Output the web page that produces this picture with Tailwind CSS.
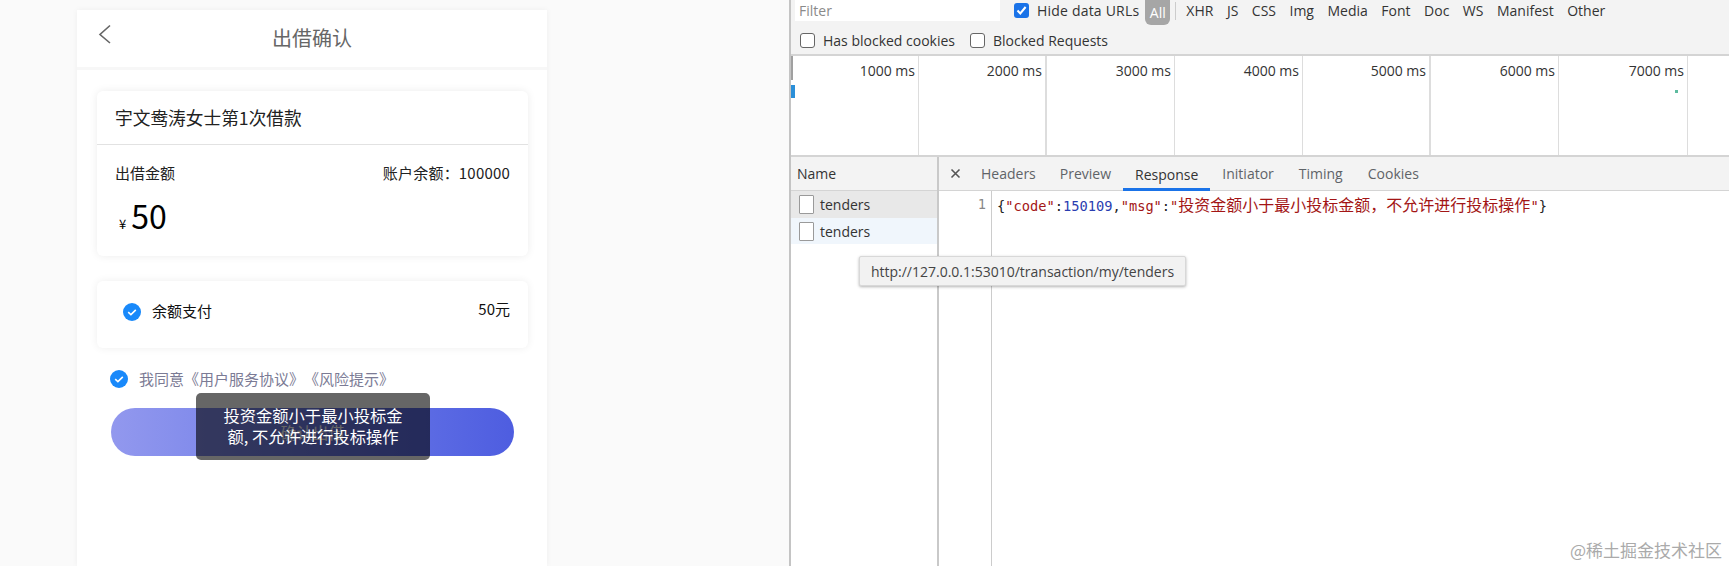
<!DOCTYPE html>
<html lang="zh-CN">
  <head>
    <meta charset="UTF-8" />
    <script src="https://cdn.jsdelivr.net/npm/@tailwindcss/browser@4"></script>
    <title>出借确认</title>
  </head>
  <body class="relative flex h-[566px] w-[1729px] overflow-hidden bg-white font-['Noto_Sans_CJK_SC',sans-serif]">
    <!-- mobile page -->
    <div class="h-full w-[789px] shrink-0 bg-[#fafafa] pl-[77px] pt-[10px]">
      <div class="relative h-[556px] w-[470px] bg-white shadow-[0_0_6px_rgba(0,0,0,0.05)]">
        <div class="relative flex h-[60px] items-center justify-center border-b-[3px] border-[#f7f7f7] text-[20px] text-[#666]">
          <svg class="absolute left-[21px] top-[14px]" width="14" height="20" viewBox="0 0 14 20" fill="none" stroke="#666" stroke-width="1.6"><path d="M12 1.5 2 10.5l10 8.5" /></svg>
          <span class="-mt-[1px]">出借确认</span>
        </div>
        <div class="ml-[20px] mr-[19px] mt-[21px] h-[165px] rounded-[6px] bg-white shadow-[0_0_8px_rgba(0,0,0,0.08)]">
          <div class="flex h-[54px] items-center border-b border-[#e2e2e2] pb-[1px] pl-[18px] text-[17.7px] text-[#222]">宇文鸯涛女士第1次借款</div>
          <div class="flex justify-between pl-[18px] pr-[18px] pt-[17px] text-[15px] leading-[22px] text-[#222]">
            <span>出借金额</span>
            <span class="tracking-[0.2px]">账户余额：100000</span>
          </div>
          <div class="flex items-baseline pl-[22px] pt-[11px] text-black">
            <span class="mr-[5px] text-[13px]">¥</span>
            <span class="text-[32px] leading-[40px]">50</span>
          </div>
        </div>
        <div class="ml-[20px] mr-[19px] mt-[25px] flex h-[67px] justify-between rounded-[6px] bg-white pl-[26px] pr-[18px] text-[15px] text-[#111] shadow-[0_0_8px_rgba(0,0,0,0.07)]">
          <div class="flex h-[61px] items-center gap-[11px]">
            <svg width="18" height="18" viewBox="0 0 18 18"><circle cx="9" cy="9" r="9" fill="#1989fa" /><path d="M5.2 9.2 7.9 11.6 12.8 6.9" fill="none" stroke="#fff" stroke-width="1.6" /></svg>
            <span>余额支付</span>
          </div>
          <span class="pt-[17px] leading-[22px]">50元</span>
        </div>
        <div class="ml-[33px] mt-[20px] flex h-[22px] items-center gap-[11px] text-[15px] text-[#7b7b95]">
          <svg width="18" height="18" viewBox="0 0 18 18"><circle cx="9" cy="9" r="9" fill="#1989fa" /><path d="M5.2 9.2 7.9 11.6 12.8 6.9" fill="none" stroke="#fff" stroke-width="1.6" /></svg>
          <span class="[text-spacing-trim:space-all]">我同意《用户服务协议》《风险提示》</span>
        </div>
        <div class="ml-[34px] mt-[18px] flex h-[48px] w-[403px] items-center justify-center rounded-full bg-gradient-to-r from-[#9298ee] to-[#4e5de0] text-[16px] text-white">确认出借</div>
        <!-- toast -->
        <div class="absolute left-[119px] top-[383px] w-[234px] rounded-[5px] bg-black/60 px-[26px] pb-[13px] pt-[12px] text-center text-[16.3px] leading-[21px] text-white">投资金额小于最小投标金额, 不允许进行投标操作</div>
      </div>
    </div>

    <!-- devtools -->
    <div class="relative flex h-full flex-1 flex-col border-l-2 border-[#c4c4c4] font-['Open_Sans','Noto_Sans_CJK_SC',sans-serif] text-[14px] text-[#333]">
      <div class="h-[56px] shrink-0 border-b-2 border-[#d4d4d4] bg-[#f3f3f3]">
        <div class="flex h-[27px] items-start pl-[4px]">
          <div class="flex h-[21px] w-[205px] items-center bg-white pl-[4px] text-[#8a8a8a]">Filter</div>
          <div class="ml-[14px] mt-[3px] flex h-[15px] w-[15px] items-center justify-center rounded-[3px] bg-[#1a73e8]">
            <svg width="11" height="11" viewBox="0 0 11 11"><path d="M1.5 5.5 4.3 8.5 9.6 2" fill="none" stroke="#fff" stroke-width="2" /></svg>
          </div>
          <span class="ml-[8px] leading-[21px] tracking-[0.2px]">Hide data URLs</span>
          <span class="ml-[6px] flex h-[25px] w-[25px] items-center justify-center rounded-b-[6px] bg-[#a6a6a6] text-white">All</span>
          <span class="ml-[5px] mt-[2px] h-[18px] w-px bg-[#ccc]"></span>
          <div class="ml-[10px] flex gap-[13.5px] leading-[22px] text-[#333]">
            <span>XHR</span><span>JS</span><span>CSS</span><span>Img</span><span>Media</span><span>Font</span><span>Doc</span><span>WS</span><span>Manifest</span><span>Other</span>
          </div>
        </div>
        <div class="flex h-[26px] items-center pl-[9px]">
          <span class="h-[15px] w-[15px] rounded-[3px] border border-[#666] bg-white"></span>
          <span class="ml-[8px]">Has blocked cookies</span>
          <span class="ml-[15px] h-[15px] w-[15px] rounded-[3px] border border-[#666] bg-white"></span>
          <span class="ml-[8px]">Blocked Requests</span>
        </div>
      </div>

      <!-- overview timeline -->
      <div class="relative flex h-[101px] shrink-0 border-b-2 border-[#d4d4d4] pl-[1px]">
        <div class="w-[127px] shrink-0 border-r border-[#ddd] pr-[3px] pt-[4px] text-right">1000 ms</div>
        <div class="w-[128px] shrink-0 border-r-2 border-[#ddd] pr-[3px] pt-[4px] text-right">2000 ms</div>
        <div class="w-[128px] shrink-0 border-r border-[#ddd] pr-[3px] pt-[4px] text-right">3000 ms</div>
        <div class="w-[128px] shrink-0 border-r border-[#ddd] pr-[3px] pt-[4px] text-right">4000 ms</div>
        <div class="w-[128px] shrink-0 border-r-2 border-[#ddd] pr-[3px] pt-[4px] text-right">5000 ms</div>
        <div class="w-[128px] shrink-0 border-r border-[#ddd] pr-[3px] pt-[4px] text-right">6000 ms</div>
        <div class="w-[129px] shrink-0 border-r border-[#ddd] pr-[3px] pt-[4px] text-right">7000 ms</div>
        <span class="absolute left-0 top-0 h-[24px] w-[2px] bg-[#a0a0a0]"></span>
        <span class="absolute left-0 top-[29px] h-[13px] w-[4px] bg-[#2b8fd8]"></span>
        <span class="absolute left-[884px] top-[34px] h-[3px] w-[3px] bg-[#5dbb9f]"></span>
      </div>

      <!-- requests and response -->
      <div class="flex min-h-0 flex-1">
        <div class="w-[148px] shrink-0 border-r-2 border-[#c9c9c9]">
          <div class="flex h-[34px] items-center border-b border-[#d4d4d4] bg-[#f3f3f3] pl-[6px] text-[#333]">Name</div>
          <div class="flex h-[27px] items-center gap-[6px] bg-[#e8e8e8] pl-[8px]">
            <span class="h-[19px] w-[15px] rounded-[1px] border border-[#9a9a9a] bg-white"></span>tenders
          </div>
          <div class="flex h-[26px] items-center gap-[6px] bg-[#f0f6fc] pl-[8px]">
            <span class="h-[19px] w-[15px] rounded-[1px] border border-[#9a9a9a] bg-white"></span>tenders
          </div>
        </div>
        <div class="min-w-0 flex-1">
          <div class="flex h-[34px] items-center border-b border-[#d4d4d4] bg-[#f3f3f3] text-[#5f6368]">
            <svg class="ml-[11px] mr-[8px]" width="11" height="11" viewBox="0 0 11 11" stroke="#555" stroke-width="1.6"><path d="M1.5 1.5l8 8M9.5 1.5l-8 8" /></svg>
            <span class="px-[12px]">Headers</span>
            <span class="px-[12px]">Preview</span>
            <span class="-mb-px flex h-[34px] items-center border-b-[3px] border-[#1a73e8] px-[12px] pt-[3px] text-[#333]">Response</span>
            <span class="px-[12px]">Initiator</span>
            <span class="px-[13px]">Timing</span>
            <span class="px-[12px]">Cookies</span>
          </div>
          <div class="flex h-[calc(100%-34px)] font-['DejaVu_Sans_Mono','Noto_Sans_CJK_SC',monospace] text-[13.7px] leading-[26px]">
            <div class="w-[53px] shrink-0 border-r border-[#ccc] pr-[5px] text-right text-[#888]">1</div>
            <div class="whitespace-nowrap pl-[5px] text-[#222]">{<span class="text-[#a31515]">"code"</span>:<span class="text-[#2a3db0]">150109</span>,<span class="text-[#a31515]">"msg"</span>:<span class="text-[#a31515]">"<span class="font-['Noto_Sans_CJK_SC',sans-serif] text-[16px]">投资金额小于最小投标金额，不允许进行投标操作</span>"</span>}</div>
          </div>
        </div>
      </div>

      <!-- hover tooltip -->
      <div class="absolute left-[68px] top-[256px] flex h-[30px] w-[327px] items-center justify-center rounded-[2px] border border-[#d8d8d8] bg-[#f2f2f2] text-[14px] text-[#444] shadow-[0_1px_3px_rgba(0,0,0,0.3)]">http://127.0.0.1:53010/transaction/my/tenders</div>
    </div>

    <span class="absolute bottom-[4px] right-[7px] text-[17px] text-[#aaa]">@稀土掘金技术社区</span>
  </body>
</html>
